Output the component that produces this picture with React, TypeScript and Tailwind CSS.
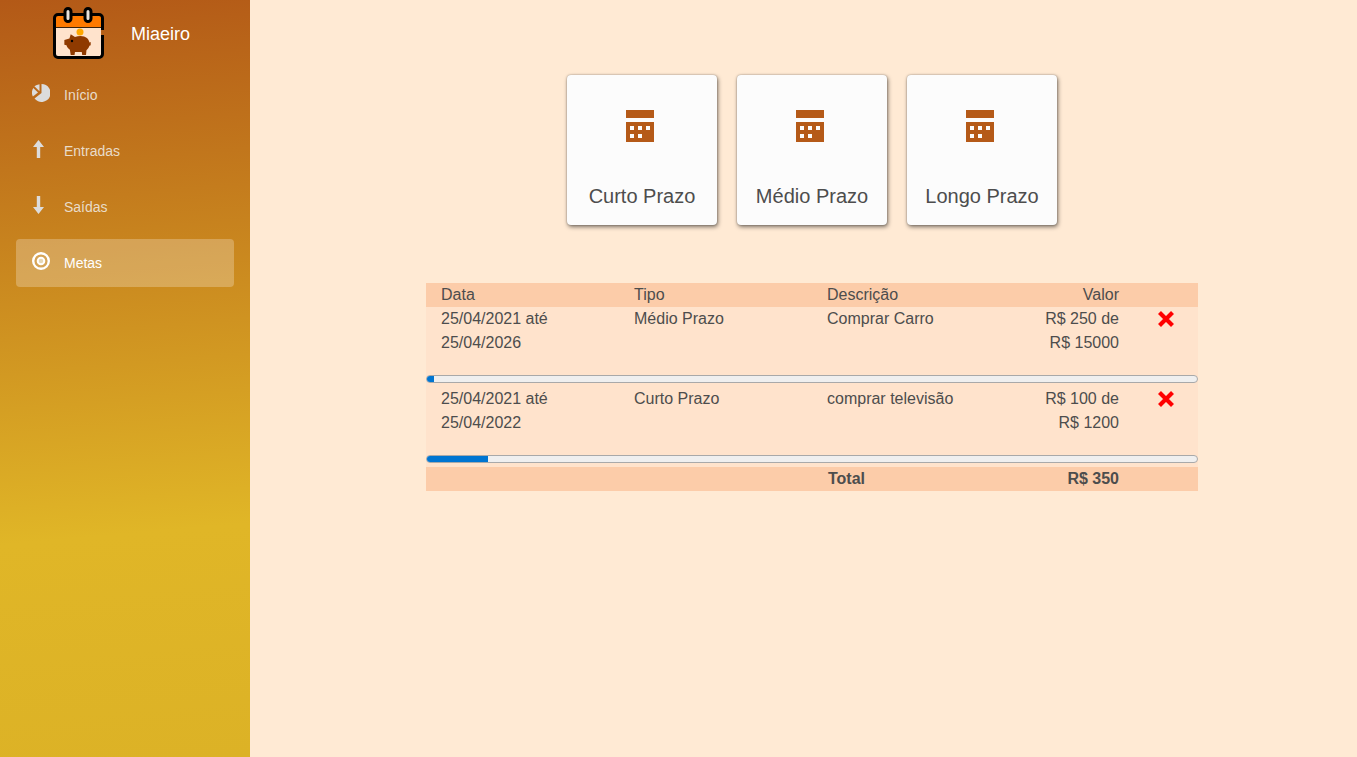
import type { ReactNode } from "react";

const Logo = () => (
  <svg viewBox="0 0 56 56" className="h-14 w-14">
    <rect x="4" y="9" width="46" height="44" rx="4" fill="#ffe3cc" />
    <path d="M4 22V13a4 4 0 0 1 4-4h39a4 4 0 0 1 4 4v9z" fill="#ff7a00" />
    <path d="M4 22.500h47" stroke="#3a2410" strokeWidth="1" />
    <path
      d="M51.500 25v-12a3.500 3.500 0 0 0-3.500-3.500h-41a3.500 3.500 0 0 0-3.500 3.500v36a3.500 3.500 0 0 0 3.500 3.500h41a3.500 3.500 0 0 0 3.500-3.500v-19"
      fill="none"
      stroke="#000"
      strokeWidth="3"
    />
    <rect x="14" y="3.500" width="6" height="13" rx="3" fill="#e8e2dc" stroke="#000" strokeWidth="3" />
    <rect x="34" y="3.500" width="6" height="13" rx="3" fill="#e8e2dc" stroke="#000" strokeWidth="3" />
    <path
      transform="translate(4 2.500) scale(0.85 0.97)"
      d="M17 32l1.500-4.500 5 3c5-2 11-1.500 14 1 2 1.500 2.500 3 3 4.500l1.500-.5v3.500l-1.500.5c-.5 2-2 3.500-3.500 4.500l-.5 5h-4.500l-.5-3h-8l-.5 3h-4.500l-1-5.500c-2-1-3.500-2.500-4-4.500l-2.500-.5v-5z"
      fill="#8f3a00"
    />
    <circle cx="29" cy="27" r="3.500" fill="#ffa800" />
    <circle cx="21" cy="36" r="1.200" fill="#000" />
  </svg>
);

const PieIcon = () => (
  <svg viewBox="0 0 18 18" className="size-[18px]" fill="#dcdcdc">
    <path d="M9.500 0a9 9 0 1 1-7 14.600L9.500 9z" />
    <path d="M7.500 0.200V7.200L2.400 2.300A9 9 0 0 1 7.500 0.200z" />
    <path d="M1.300 4l4.700 4.500L0.900 12.600A9 9 0 0 1 1.300 4z" />
  </svg>
);

const ArrowUp = () => (
  <svg viewBox="0 0 11 18" className="h-[18px] w-[11px]" fill="#dcdcdc">
    <path d="M5.500 0L11 7H7.200V18H3.800V7H0z" />
  </svg>
);

const ArrowDown = () => (
  <svg viewBox="0 0 11 18" className="h-[18px] w-[11px]" fill="#dcdcdc">
    <path d="M5.500 18L0 11H3.800V0H7.200V11H11z" />
  </svg>
);

const Target = () => (
  <svg viewBox="0 0 18 18" className="size-[18px]">
    <circle cx="9" cy="9" r="7.800" fill="none" stroke="#fff" strokeWidth="2.400" />
    <circle cx="9" cy="9" r="3.300" fill="#e8d8b4" stroke="#fff" strokeWidth="2" />
  </svg>
);

const CalendarIcon = () => (
  <svg viewBox="0 0 28 32" className="mr-1 h-8 w-7" fill="#b55a18">
    <rect width="28" height="8" />
    <path
      fillRule="evenodd"
      d="M0 12h28v20H0zM4 16v4h4v-4zM12 16v4h4v-4zM20 16v4h4v-4zM4 24v4h4v-4zM12 24v4h4v-4z"
    />
  </svg>
);

const CloseIcon = () => (
  <svg viewBox="0 0 16 16" className="mr-px size-4" stroke="#ff0000" strokeWidth="4.200">
    <path d="M1.500 1.500L14.500 14.500M14.500 1.500L1.500 14.500" />
  </svg>
);

const NavItem = ({ icon, label, active }: { icon: ReactNode; label: string; active?: boolean }) => (
  <div
    className={
      active
        ? "flex h-12 items-center rounded bg-white/25 text-white"
        : "flex h-12 items-center rounded text-[#e9dcc9]"
    }
  >
    <span className="flex w-12 -translate-y-0.5 justify-center">{icon}</span>
    <span className="text-sm">{label}</span>
  </div>
);

const Sidebar = () => (
  <aside className="flex w-[250px] shrink-0 flex-col bg-[linear-gradient(175deg,#b35917_0%,#e0b627_70%,#dcb226_100%)]">
    <div className="flex h-[71px] items-start pt-[5px] pl-[51px]">
      <Logo />
      <span className="mt-[18px] ml-[24px] text-lg leading-[22px] text-white">Miaeiro</span>
    </div>
    <nav className="flex flex-col gap-2 px-4">
      <NavItem icon={<span className="pl-0.5"><PieIcon /></span>} label="Início" />
      <NavItem icon={<span className="pr-1"><ArrowUp /></span>} label="Entradas" />
      <NavItem icon={<span className="pr-1"><ArrowDown /></span>} label="Saídas" />
      <NavItem icon={<span className="pl-0.5"><Target /></span>} label="Metas" active />
    </nav>
  </aside>
);

const Card = ({ label }: { label: string }) => (
  <div className="flex h-[150px] w-[150px] flex-col items-center rounded bg-[#fcfcfc] pt-[35px] shadow-[1px_2px_4px_rgba(0,0,0,0.5),0_0_2px_rgba(0,0,0,0.35)]">
    <CalendarIcon />
    <span className="mt-10 text-xl leading-[28px]">{label}</span>
  </div>
);

const rowGrid = "grid grid-cols-[193px_193px_193px_129px_64px]";

const goals = [
  {
    date: "25/04/2021 até 25/04/2026",
    type: "Médio Prazo",
    description: "Comprar Carro",
    value: "R$ 250 de R$ 15000",
    fill: "w-[7px]",
  },
  {
    date: "25/04/2021 até 25/04/2022",
    type: "Curto Prazo",
    description: "comprar televisão",
    value: "R$ 100 de R$ 1200",
    fill: "w-[61px]",
  },
];

const GoalsTable = () => (
  <div className="mt-[58px] w-[772px] bg-[#ffe3cc]">
    <div className={`${rowGrid} h-6 bg-[#fccca9] leading-6`}>
      <div className="pl-[15px]">Data</div>
      <div className="pl-[15px]">Tipo</div>
      <div className="pl-[15px]">Descrição</div>
      <div className="pr-[15px] text-right">Valor</div>
    </div>
    {goals.map((goal) => (
      <div key={goal.type} className="pb-1">
        <div className={`${rowGrid} h-[68px] leading-6`}>
          <div className="px-[15px]">{goal.date}</div>
          <div className="pl-[15px]">{goal.type}</div>
          <div className="pl-[15px]">{goal.description}</div>
          <div className="pr-[15px] pl-[30px] text-right">{goal.value}</div>
          <div className="flex h-6 items-center justify-center">
            <CloseIcon />
          </div>
        </div>
        <div className="h-2 overflow-hidden rounded-full border border-[#a9a9a9] bg-[#efefef]">
          <div className={`${goal.fill} h-full bg-[#0075d1]`} />
        </div>
      </div>
    ))}
    <div className={`${rowGrid} h-6 bg-[#fccca9] font-bold leading-6`}>
      <div />
      <div />
      <div className="pl-4">Total</div>
      <div className="pr-[15px] text-right">R$ 350</div>
    </div>
  </div>
);

export default function App() {
  return (
    <div className="flex h-[757px] overflow-hidden bg-[#ffead4] font-['Liberation_Sans',Arial,sans-serif] text-[#4d4d4d]">
      <Sidebar />
      <main className="flex flex-1 flex-col items-center pt-[75px] pl-[17px]">
        <div className="flex gap-5">
          <Card label="Curto Prazo" />
          <Card label="Médio Prazo" />
          <Card label="Longo Prazo" />
        </div>
        <GoalsTable />
      </main>
    </div>
  );
}
